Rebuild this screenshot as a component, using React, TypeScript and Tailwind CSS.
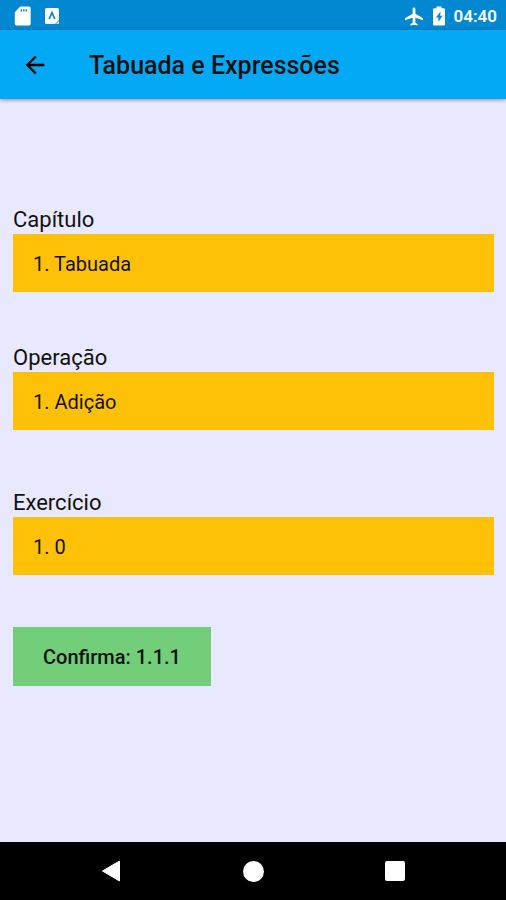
import React, { useState } from 'react';

interface PickerProps {
  id: string;
  label: string;
  options: string[];
  value: string;
  onChange: (value: string) => void;
}

const Picker: React.FC<PickerProps> = ({ id, label, options, value, onChange }) => (
  <div className="flex flex-col">
    <label htmlFor={id} className="text-[22px] leading-7">{label}</label>
    <select
      id={id}
      value={value}
      onChange={e => onChange(e.target.value)}
      className="h-[58px] w-full appearance-none rounded-none bg-[#ffc107] px-5 pt-[2px] text-xl outline-none"
    >
      {options.map(option => (
        <option key={option} value={option}>{option}</option>
      ))}
    </select>
  </div>
);

/* ---------------- SYSTEM BARS ---------------- */

const StatusBar: React.FC = () => (
  <div className="flex h-[30px] items-center justify-between bg-[#0288d1] pt-[2px] pr-[9px] pl-[14px] text-white">
    <div className="flex items-center gap-[13px]">
      <svg width="17" height="20" viewBox="0 0 17 20" fill="currentColor" aria-hidden="true">
        <path fillRule="evenodd" d="M6.2 .5H15a1.7 1.7 0 0 1 1.7 1.700v15.600A1.7 1.7 0 0 1 15 19.500H2.5a1.7 1.7 0 0 1-1.7-1.700V6.2zM6.700 3.200v2.400h1.400V3.200zm2.500 0v2.400h1.400V3.200zm2.500 0v2.400h1.400V3.200z" />
      </svg>
      <svg width="16" height="18" viewBox="0 0 16 18" aria-hidden="true">
        <path fill="currentColor" d="M2.5 1h11A1.5 1.5 0 0 1 15 2.500V13l-4 4H2.5A1.5 1.5 0 0 1 1 15.500v-13A1.5 1.5 0 0 1 2.500 1z" />
        <path fill="currentColor" d="M12 17h1.500a1.5 1.5 0 0 0 1.500-1.500V14z" />
        <path fill="none" stroke="#0288d1" strokeWidth="1.7" d="M5.200 12 8 5.600l2.800 6.400" />
      </svg>
    </div>
    <div className="flex items-center">
      <svg width="20" height="21" viewBox="1 1 22 22" fill="currentColor" aria-hidden="true">
        <path d="M22 16v-2l-8.500-5V3.500c0-.83-.67-1.500-1.500-1.500s-1.500.67-1.500 1.500V9L2 14v2l8.500-2.500V19L8 20.500V22l4-1 4 1v-1.500L13.500 19v-5.500z" />
      </svg>
      <svg className="ml-2" width="14" height="20" viewBox="0 0 14 20" fill="currentColor" aria-hidden="true">
        <path fillRule="evenodd" d="M4.500 .5h5v1.800h2.200c.7 0 1.300.6 1.300 1.300v14.600c0 .7-.6 1.300-1.300 1.300H2.300c-.7 0-1.300-.6-1.300-1.300V3.600c0-.7.6-1.300 1.300-1.300h2.200zM8.600 5.500 3.900 11.600h2.500v4.400l4-6.300H8.100z" />
      </svg>
      <span className="ml-2 text-[17px] leading-6 font-semibold">04:40</span>
    </div>
  </div>
);

const NavigationBar: React.FC = () => (
  <nav className="grid h-[58px] grid-cols-3 bg-black px-10 text-white">
    <button type="button" aria-label="Back" className="flex items-center justify-center">
      <svg width="20" height="22" viewBox="0 0 20 22" fill="currentColor" stroke="currentColor" strokeLinejoin="round">
        <path d="M1.500 11 18.500 1v20z" />
      </svg>
    </button>
    <button type="button" aria-label="Home" className="flex items-center justify-center">
      <span className="size-[21px] rounded-full bg-white" />
    </button>
    <button type="button" aria-label="Recent apps" className="flex items-center justify-center">
      <span className="size-5 rounded-xs bg-white" />
    </button>
  </nav>
);

/* --------------------------------------------- */

const App: React.FC = () => {
  const [chapter, setChapter] = useState('1. Tabuada');
  const [operation, setOperation] = useState('1. Adição');
  const [exercise, setExercise] = useState('1. 0');

  return (
    <div className="flex min-h-screen flex-col bg-[#e8e8ff] font-[Roboto,sans-serif] text-[#111111]">
      <StatusBar />
      <header className="flex h-[69px] items-center bg-[#03a9f4] pl-[21px] shadow-[0_1px_4px_rgba(0,0,0,0.4)]">
        <button type="button" aria-label="Voltar" className="text-black">
          <svg width="28" height="28" viewBox="0 0 24 24" fill="currentColor">
            <path d="M20 11H7.830l5.590-5.590L12 4l-8 8 8 8 1.410-1.410L7.830 13H20z" />
          </svg>
        </button>
        <h1 className="ml-10 pt-[2px] text-[25px] leading-8 font-medium">Tabuada e Expressões</h1>
      </header>

      <main className="flex flex-1 flex-col px-3 pt-[107px] pl-[13px]">
        <Picker id="chapter" label="Capítulo" options={['1. Tabuada']} value={chapter} onChange={setChapter} />
        <div className="mt-[52px]">
          <Picker id="operation" label="Operação" options={['1. Adição']} value={operation} onChange={setOperation} />
        </div>
        <div className="mt-[59px]">
          <Picker id="exercise" label="Exercício" options={['1. 0']} value={exercise} onChange={setExercise} />
        </div>
        <button type="button" className="mt-[52px] h-[59px] self-start bg-[#72ce78] px-[30px] text-xl font-medium">
          Confirma: 1.1.1
        </button>
      </main>

      <NavigationBar />
    </div>
  );
};

export default App;
